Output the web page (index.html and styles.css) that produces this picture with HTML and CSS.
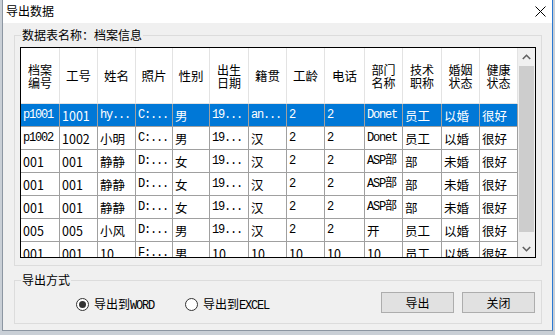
FILE: index.html
```html
<!DOCTYPE html>
<html lang="zh">
<head>
<meta charset="utf-8">
<title>导出数据</title>
<link rel="stylesheet" href="styles.css">
</head>
<body>
<div class="window">
  <div class="titlebar">
    <span class="title">导出数据</span>
    <svg class="close" width="11" height="11" viewBox="0 0 11 11"><path d="M0.5 0.5 L10.5 10.5 M10.5 0.5 L0.5 10.5" stroke="#000" stroke-width="1" fill="none"/></svg>
  </div>
  <div class="client">
    <fieldset class="group data-group">
      <legend>数据表名称：档案信息</legend>
      <div class="grid">
        <div class="rows">
          <div class="row head">
            <div class="c two"><span>档案</span><span>编号</span></div><div class="c">工号</div><div class="c">姓名</div><div class="c">照片</div><div class="c">性别</div><div class="c two"><span>出生</span><span>日期</span></div><div class="c">籍贯</div><div class="c">工龄</div><div class="c">电话</div><div class="c two"><span>部门</span><span>名称</span></div><div class="c two"><span>技术</span><span>职称</span></div><div class="c two"><span>婚姻</span><span>状态</span></div><div class="c two"><span>健康</span><span>状态</span></div>
          </div>
          <div class="row sel">
            <div class="c m">p1001</div><div class="c">1001</div><div class="c m">hy...</div><div class="c m">C:...</div><div class="c">男</div><div class="c m">19...</div><div class="c m">an...</div><div class="c m">2</div><div class="c m">2</div><div class="c m">Donet</div><div class="c">员工</div><div class="c">以婚</div><div class="c">很好</div>
          </div>
          <div class="row">
            <div class="c m">p1002</div><div class="c">1002</div><div class="c">小明</div><div class="c m">C:...</div><div class="c">男</div><div class="c m">19...</div><div class="c">汉</div><div class="c m">2</div><div class="c m">2</div><div class="c m">Donet</div><div class="c">员工</div><div class="c">以婚</div><div class="c">很好</div>
          </div>
          <div class="row">
            <div class="c">001</div><div class="c">001</div><div class="c">静静</div><div class="c m">D:...</div><div class="c">女</div><div class="c m">19...</div><div class="c">汉</div><div class="c m">2</div><div class="c m">2</div><div class="c m">ASP部</div><div class="c">部</div><div class="c">未婚</div><div class="c">很好</div>
          </div>
          <div class="row">
            <div class="c">001</div><div class="c">001</div><div class="c">静静</div><div class="c m">D:...</div><div class="c">女</div><div class="c m">19...</div><div class="c">汉</div><div class="c m">2</div><div class="c m">2</div><div class="c m">ASP部</div><div class="c">部</div><div class="c">未婚</div><div class="c">很好</div>
          </div>
          <div class="row">
            <div class="c">001</div><div class="c">001</div><div class="c">静静</div><div class="c m">D:...</div><div class="c">女</div><div class="c m">19...</div><div class="c">汉</div><div class="c m">2</div><div class="c m">2</div><div class="c m">ASP部</div><div class="c">部</div><div class="c">未婚</div><div class="c">很好</div>
          </div>
          <div class="row">
            <div class="c">005</div><div class="c">005</div><div class="c">小风</div><div class="c m">D:...</div><div class="c">男</div><div class="c m">19...</div><div class="c">汉</div><div class="c m">2</div><div class="c m">2</div><div class="c">开</div><div class="c">员工</div><div class="c">以婚</div><div class="c">很好</div>
          </div>
          <div class="row">
            <div class="c">001</div><div class="c">001</div><div class="c">10</div><div class="c m">F:...</div><div class="c">男</div><div class="c">10</div><div class="c">10</div><div class="c">10</div><div class="c">10</div><div class="c">10</div><div class="c">员工</div><div class="c">以婚</div><div class="c">很好</div>
          </div>
        </div>
        <div class="vscroll">
          <div class="sb-btn"><svg width="9" height="6" viewBox="0 0 9 6"><path d="M0.8 5 L4.5 1.3 L8.2 5" stroke="#606060" stroke-width="1.6" fill="none"/></svg></div>
          <div class="thumb"></div>
          <div class="sb-space"></div>
          <div class="sb-btn"><svg width="9" height="6" viewBox="0 0 9 6"><path d="M0.8 1 L4.5 4.7 L8.2 1" stroke="#606060" stroke-width="1.6" fill="none"/></svg></div>
        </div>
      </div>
    </fieldset>
    <fieldset class="group export-group">
      <legend>导出方式</legend>
      <div class="export-body">
        <div class="opts">
          <label class="opt"><span class="radio checked"></span><span>导出到<span class="lat">WORD</span></span></label>
          <label class="opt"><span class="radio"></span><span>导出到<span class="lat">EXCEL</span></span></label>
        </div>
        <div class="btns">
          <button class="btn">导出</button>
          <button class="btn">关闭</button>
        </div>
      </div>
    </fieldset>
  </div>
</div>
</body>
</html>
```

FILE: styles.css
```css
* { box-sizing: border-box; }
html, body { margin: 0; padding: 0; }
body {
  width: 555px;
  height: 335px;
  overflow: hidden;
  background: #c9cfd6;
  font-family: "Noto Sans CJK SC", "Noto Sans", sans-serif;
  font-size: 12px;
  color: #000;
}
.window {
  margin-left: 2px;
  width: 551px;
  height: 331px;
  background: #f0f0f0;
  border-left: 1px solid #8c96a2;
  border-right: 1px solid #2b79d2;
  border-bottom: 1px solid #8c96a2;
  display: flex;
  flex-direction: column;
}
.titlebar {
  height: 23px;
  background: #fff;
  display: flex;
  align-items: center;
  padding: 0 0 1px 3px;
  flex: none;
}
.title { font-size: 12px; line-height: 14px; flex: 1; }
.close { margin-right: 6px; }
.client {
  padding-left: 11px;
  display: flex;
  flex-direction: column;
}
.group {
  margin: 0;
  width: 528px;
  border: 1px solid #dcdcdc;
  min-inline-size: 0;
}
.group legend {
  font-size: 12px;
  line-height: 16px;
  padding: 0 1px;
  margin-left: 1px;
}
.data-group {
  margin-top: 4px;
  padding: 4px 5px 7px 5px;
}
.grid {
  width: 516px;
  height: 211px;
  border: 1px solid #000;
  display: flex;
  background: #fff;
}
.rows {
  width: 497px;
  overflow: hidden;
  flex: none;
}
.row {
  display: grid;
  grid-template-columns: 39px 38px 38px 37px 37px 39px 38px 38px 40px 38px 39px 38px 38px;
  height: 23px;
}
.c {
  border-right: 1px solid #a0a0a0;
  border-bottom: 1px solid #a0a0a0;
  padding-left: 2px;
  white-space: nowrap;
  overflow: hidden;
  display: flex;
  align-items: center;
  font-size: 12.5px;
  line-height: 15px;
}
.c.m {
  font-family: "Liberation Mono", "Noto Sans CJK SC", monospace;
  font-size: 12px;
  letter-spacing: -1.2px;
}
.head { height: 56px; }
.head .c {
  border-color: #e3e3e3;
  justify-content: center;
  padding-left: 0;
  font-size: 12.5px;
  line-height: 15px;
}
.head .c.two {
  flex-direction: column;
  font-size: 12px;
  line-height: 13px;
}
.head .c.two span { display: block; height: 13px; }
.sel .c { background: #0078d7; color: #fff; }
.vscroll {
  width: 17px;
  flex: none;
  background: #f0f0f0;
  display: flex;
  flex-direction: column;
  align-items: center;
}
.sb-btn {
  height: 17px;
  width: 17px;
  display: flex;
  align-items: center;
  justify-content: center;
  flex: none;
}
.thumb {
  margin-top: 1px;
  width: 15px;
  height: 166px;
  background: #cdcdcd;
  flex: none;
}
.sb-space { flex: 1; }
.export-group {
  margin-top: 6px;
  padding: 4px 6px 10px 5px;
}
.export-body {
  display: flex;
  align-items: flex-start;
}
.opts {
  margin-left: 56px;
  margin-top: 6px;
  display: flex;
  gap: 31px;
}
.opt {
  display: flex;
  align-items: center;
  gap: 5px;
  height: 13px;
  font-size: 12px;
  line-height: 14px;
}
.lat {
  font-family: "Liberation Mono", monospace;
  font-size: 12px;
  letter-spacing: -1.2px;
}
.radio {
  width: 13px;
  height: 13px;
  border-radius: 50%;
  border: 1px solid #333;
  background: #fff;
  display: flex;
  align-items: center;
  justify-content: center;
  flex: none;
}
.radio.checked::after {
  content: "";
  width: 7px;
  height: 7px;
  border-radius: 50%;
  background: #333;
}
.btns {
  margin-left: auto;
  display: flex;
  gap: 8px;
}
.btn {
  width: 73px;
  height: 21px;
  background: #e1e1e1;
  border: 1px solid #adadad;
  font-family: "Noto Sans CJK SC", sans-serif;
  font-size: 12px;
  line-height: 14px;
  padding: 0;
  color: #000;
}
```
